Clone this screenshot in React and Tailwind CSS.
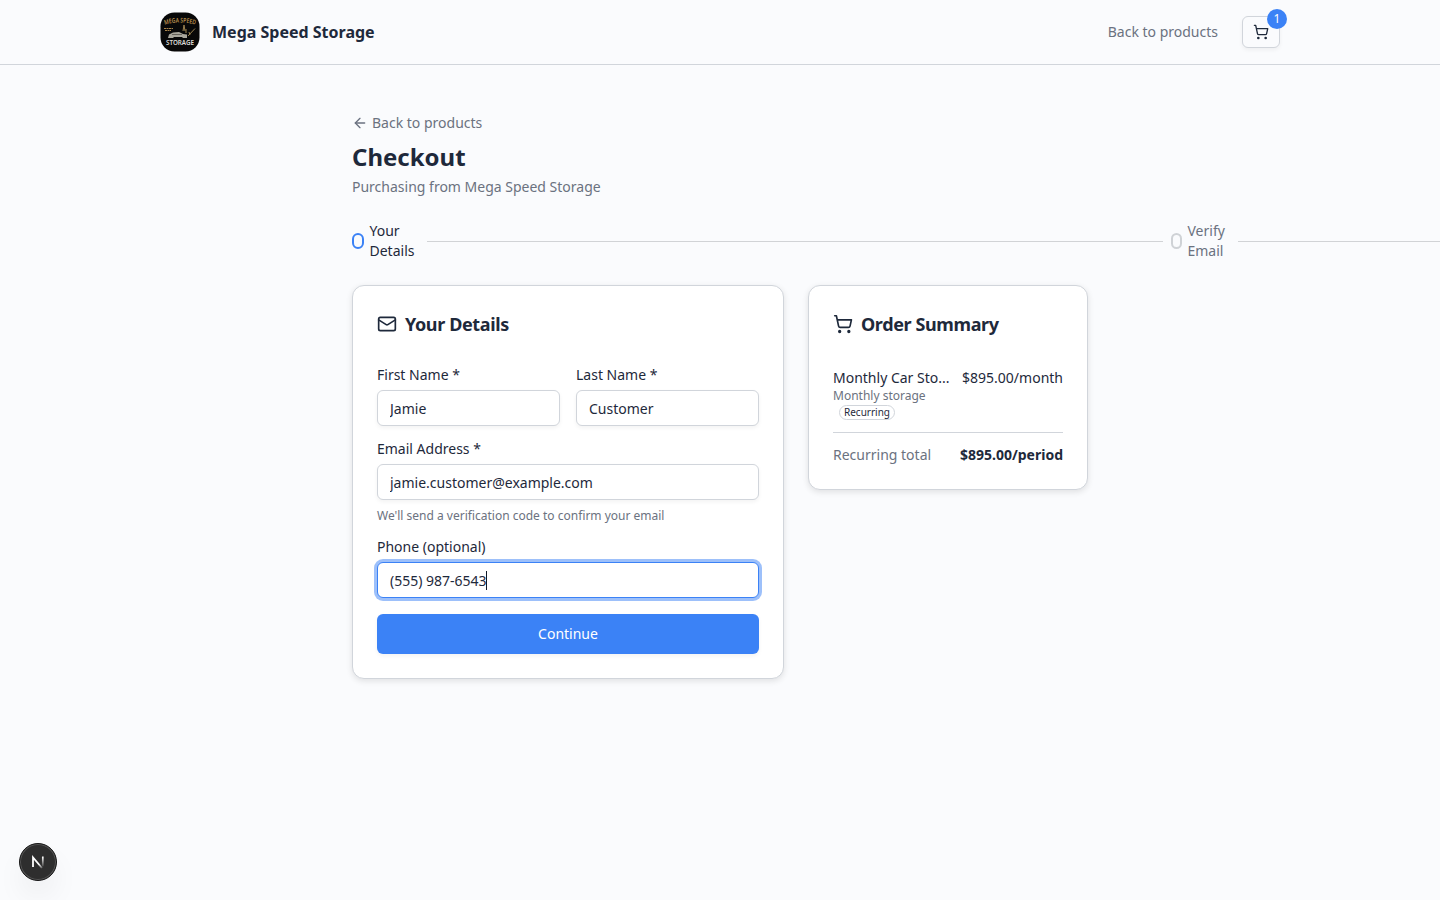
import { ArrowLeft, Mail, ShoppingCart } from "lucide-react";

const STEPS = [
  { label: ["Your", "Details"], active: true },
  { label: ["Verify", "Email"], active: false },
];

function Logo() {
  return (
    <svg width="40" height="40" viewBox="0 0 40 40" className="shrink-0">
      <defs>
        <path id="logo-arc" d="M4 13 Q20 8 36 13" />
      </defs>
      <rect x="0.5" y="0.5" width="39" height="39" rx="14" fill="#080808" />
      <text fill="#c39a52" fontSize="6.5" fontWeight="600" fontFamily="Open Sans, sans-serif" textAnchor="middle">
        <textPath href="#logo-arc" startOffset="50%" textLength="31" lengthAdjust="spacingAndGlyphs">MEGA SPEED</textPath>
      </text>
      {/* tag line and car body */}
      <path d="M4 16.500h9M5 18.500h6" stroke="#a8834a" strokeWidth="1.2" strokeDasharray="2 0.5" />
      <path d="M9 22.500l4-2 6-.5 4 2 4 .5v3.500h-4l-1-1h-8l-1 1H8z" fill="#aaa79c" />
      <path d="M12 22.500h10" stroke="#55524a" strokeWidth="0.8" />
      {/* skyline and speed marks */}
      <path d="M23 19l1-6 1 6M28 24l7-7.500M29 20l1 3M26 17v4" stroke="#9c8350" strokeWidth="1" fill="none" />
      <text x="20" y="32.500" fill="#deddd9" fontSize="6.500" fontWeight="600" fontFamily="Noto Sans, sans-serif" textAnchor="middle" textLength="28" lengthAdjust="spacingAndGlyphs">
        STORAGE
      </text>
    </svg>
  );
}

function Step({ label, active }) {
  return (
    <>
      <div className="flex shrink-0 items-center">
        <span
          className={`h-4 shrink-0 rounded-full border-2 ${active ? "w-3 border-[#3b82f6]" : "w-[11px] border-[#cfd2d6]"}`}
        />
        <span
          className={`w-[45px] text-sm leading-5 ${active ? "ml-[5.500px] text-[#1e293b]" : "ml-1.5 text-[#6b7280]"}`}
        >
          {label[0]}
          <br />
          {label[1]}
        </span>
      </div>
      <div className={`mr-2 h-px w-[736px] shrink-0 bg-[#d1d3d6] ${active ? "ml-3" : "ml-[5px]"}`} />
    </>
  );
}

function Field({ label, value, type = "text", hint, focused }) {
  return (
    <div>
      <label className="block text-sm leading-[14px]">{label}</label>
      <div className="relative mt-2">
        <input
          type={type}
          defaultValue={value}
          className={`block h-9 w-full rounded-md border bg-white px-3 text-sm outline-none ${
            focused
              ? "border-[#3b82f6] ring-3 ring-[#3b82f6]/50"
              : "border-[#d1d5db] shadow-[0_2px_4px_rgba(0,0,0,0.05)]"
          }`}
        />
        {focused && <span className="absolute top-[9px] left-[109px] h-[19px] w-px bg-[#111827]" />}
      </div>
      {hint && <p className="mt-2 text-xs text-[#6b7280]">{hint}</p>}
    </div>
  );
}

function Card({ icon: Icon, title, children }) {
  return (
    <section className="rounded-xl border border-[#d1d5db] bg-white p-6 shadow-[0_2px_6px_rgba(0,0,0,0.11)]">
      <h2 className="mb-[30px] flex items-center gap-2 text-lg leading-7 font-bold tracking-[-0.38px]">
        <Icon size={20} />
        {title}
      </h2>
      {children}
    </section>
  );
}

function DevBadge() {
  return (
    <div className="fixed bottom-[19px] left-[19px] flex size-[38px] items-center justify-center rounded-full border border-[#171717] bg-[#2e2e2e] shadow-[inset_0_0_0_1px_#555,0_16px_32px_-8px_rgba(0,0,0,0.14)]">
      <svg width="14" height="14" viewBox="0 0 14 14" fill="none">
        <defs>
          <linearGradient id="n-diag" x1="8" y1="9" x2="12.5" y2="14" gradientUnits="userSpaceOnUse">
            <stop stopColor="#fff" />
            <stop offset="1" stopColor="#fff" stopOpacity="0" />
          </linearGradient>
          <linearGradient id="n-stem" x1="11" y1="2" x2="11" y2="12.5" gradientUnits="userSpaceOnUse">
            <stop stopColor="#fff" />
            <stop offset="1" stopColor="#fff" stopOpacity="0" />
          </linearGradient>
        </defs>
        <path d="M2 12V2.500L11 13" stroke="url(#n-diag)" strokeWidth="1.8" />
        <path d="M11.800 1.500v10" stroke="url(#n-stem)" strokeWidth="1.7" />
      </svg>
    </div>
  );
}

export default function App() {
  return (
    <div className="min-h-screen overflow-hidden bg-[#fafbfd] font-['Noto_Sans',sans-serif] text-[#1e293b]">
      <header className="border-b border-[#d1d5db]">
        <div className="mx-auto flex h-16 max-w-6xl items-center justify-between px-4">
          <div className="flex items-center gap-3">
            <Logo />
            <span className="font-bold">Mega Speed Storage</span>
          </div>
          <div className="flex items-center gap-6">
            <a className="text-sm text-[#6b7280]">Back to products</a>
            <button className="relative flex h-8 w-[38px] items-center justify-center rounded-md border border-[#d1d5db] bg-[#fafbfd] shadow-[0_2px_4px_rgba(0,0,0,0.05)]">
              <ShoppingCart size={16} />
              <span className="absolute -top-2 -right-2 flex size-5 items-center justify-center rounded-full bg-[#3b82f6] text-xs text-white">
                1
              </span>
            </button>
          </div>
        </div>
      </header>

      <main className="mx-auto max-w-3xl px-4 py-12">
        <a className="flex items-center gap-1 text-sm text-[#6b7280]">
          <ArrowLeft size={16} />
          Back to products
        </a>
        <h1 className="mt-2 text-2xl font-bold">Checkout</h1>
        <p className="mt-1 text-sm text-[#6b7280]">Purchasing from Mega Speed Storage</p>

        <div className="my-6 flex items-center">
          {STEPS.map((step) => (
            <Step key={step.label[0]} {...step} />
          ))}
        </div>

        <div className="grid grid-cols-[1fr_280px] items-start gap-6">
          <Card icon={Mail} title="Your Details">
            <form className="space-y-4">
              <div className="grid grid-cols-2 gap-4">
                <Field label="First Name *" value="Jamie" />
                <Field label="Last Name *" value="Customer" />
              </div>
              <Field
                label="Email Address *"
                type="email"
                value="jamie.customer@example.com"
                hint="We'll send a verification code to confirm your email"
              />
              <Field label="Phone (optional)" type="tel" value="(555) 987-6543" focused />
              <button
                type="button"
                className="h-10 w-full rounded-md bg-[#3b82f6] text-sm text-white shadow-[0_2px_4px_rgba(0,0,0,0.05)]"
              >
                Continue
              </button>
            </form>
          </Card>

          <Card icon={ShoppingCart} title="Order Summary">
            <div className="flex justify-between text-sm">
              <div className="w-[117px]">
                <p>Monthly Car Sto...</p>
                <p className="text-xs text-[#6b7280]">Monthly storage</p>
                <span className="mt-px ml-1.5 flex h-[15px] w-14 items-center justify-center rounded-lg border border-[#d1d5db] text-[10px]">
                  Recurring
                </span>
              </div>
              <span>$895.00/month</span>
            </div>
            <div className="mt-3 h-px bg-[#d1d5db]" />
            <div className="mt-3 flex justify-between text-sm">
              <span className="text-[#6b7280]">Recurring total</span>
              <span className="font-bold">$895.00/period</span>
            </div>
          </Card>
        </div>
      </main>

      <DevBadge />
    </div>
  );
}
